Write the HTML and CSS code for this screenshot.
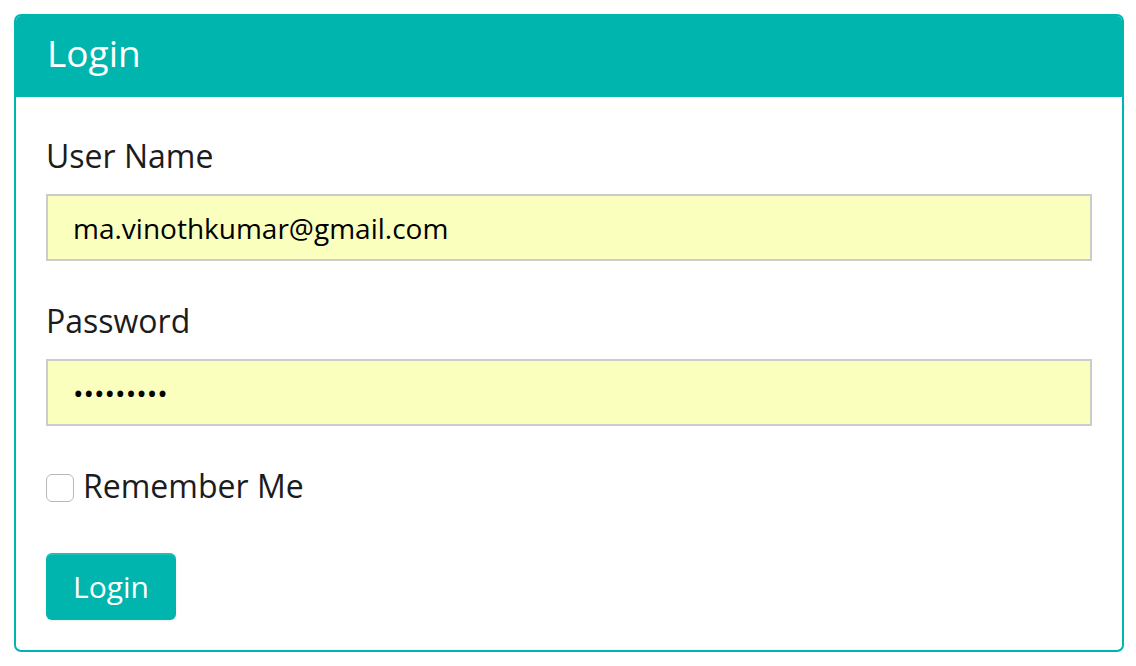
FILE: index.html
```html
<!DOCTYPE html>
<html>
<head>
<meta charset="utf-8">
<link rel="stylesheet" href="styles.css">
</head>
<body>
<div class="panel">
  <div class="panel-heading">Login</div>
  <form class="panel-body">
    <div class="form-group">
      <label class="label" for="user">User Name</label>
      <input class="field" id="user" type="text" value="ma.vinothkumar@gmail.com">
    </div>
    <div class="form-group">
      <label class="label" for="pass">Password</label>
      <input class="field" id="pass" type="password" value="123456789">
    </div>
    <label class="check-row">
      <input class="check" type="checkbox">
      <span>Remember Me</span>
    </label>
    <button class="btn" type="button">Login</button>
  </form>
</div>
</body>
</html>
```

FILE: styles.css
```css
html, body {
  margin: 0;
  padding: 0;
  background: #ffffff;
}
body {
  padding: 14px 12px 0 14px;
  font-family: "Open Sans", "Liberation Sans", sans-serif;
}
.panel {
  border: 2px solid #00b5ad;
  border-radius: 7px;
  overflow: hidden;
  background: #fff;
}
.panel-heading {
  background: #00b5ad;
  color: #fff;
  font-size: 37px;
  line-height: 40px;
  margin-top: -2px;
  padding: 19px 30px 24px 31px;
}
.panel-body {
  padding: 39px 30px 30px 30px;
  margin: 0;
  display: flex;
  flex-direction: column;
  align-items: flex-start;
}
.form-group {
  display: flex;
  flex-direction: column;
  align-self: stretch;
  margin-bottom: 40px;
}
.label {
  font-size: 32px;
  line-height: 40px;
  color: #1c1c1c;
  margin-bottom: 18px;
}
.field {
  box-sizing: border-box;
  height: 67px;
  border: 2px solid #cccccc;
  background: #faffbd;
  font-family: "Open Sans", "Liberation Sans", sans-serif;
  font-size: 28px;
  color: #000;
  padding: 0 20px 0 25px;
  margin: 0;
  outline: none;
}
.check-row {
  display: flex;
  align-items: center;
  gap: 9px;
  font-size: 32px;
  line-height: 40px;
  color: #1c1c1c;
}
.check {
  appearance: none;
  -webkit-appearance: none;
  width: 28px;
  height: 28px;
  margin: 3px 0 0 0;
  border: 1.5px solid #b8b8b8;
  border-radius: 6px;
  background: #fff;
  box-sizing: border-box;
}
.btn {
  margin-top: 47px;
  height: 67px;
  padding: 0 27px;
  border: none;
  border-radius: 6px;
  background: #00b5ad;
  color: #fff;
  font-family: "Open Sans", "Liberation Sans", sans-serif;
  font-size: 30px;
  box-shadow: inset 0 2px 0 rgba(255,255,255,0.12), 0 1px 2px rgba(0,0,0,0.08);
}
```
